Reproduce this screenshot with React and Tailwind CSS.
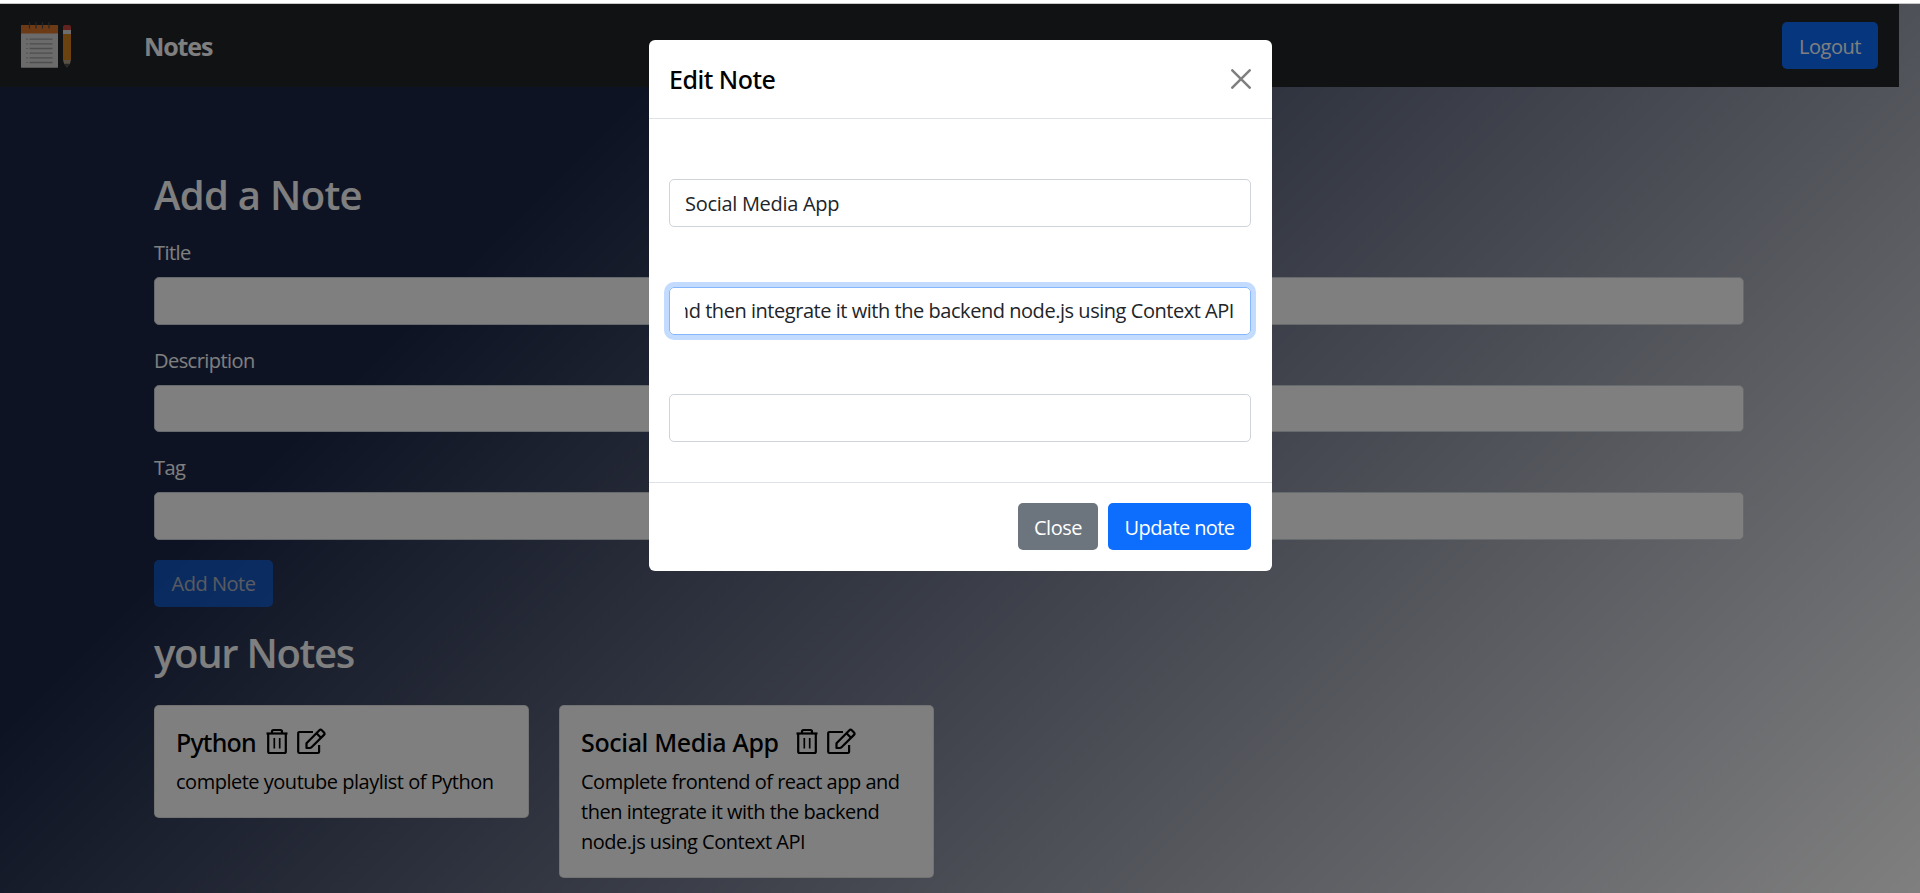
import React from 'react';

function NotepadLogo() {
  return (
    <svg className="h-[50px] w-[51px] shrink-0" viewBox="0 0 51 50">
      <rect x="0" y="4" width="37" height="43" rx="1.5" fill="#d6d6d6" />
      <path d="M0 12.5V5.5Q0 4 1.5 4H35.5Q37 4 37 5.5V12.5Z" fill="#d9752a" />
      <path d="M8.5 1V7.5M15 1V7.5M21.5 1V7.5M28 1V7.5" stroke="#4a4a4a" strokeWidth="1.2" />
      <path
        d="M8.5 18.2H31.5M8.5 22.8H31.5M8.5 27.5H31.5M8.5 32.2H31.5M8.5 36.8H31.5M8.5 41.5H31.5"
        stroke="#9a9a9a"
        strokeWidth="1.3"
      />
      <path
        d="M5 18.2H7M5 22.8H7M5 27.5H7M5 32.2H7M5 36.8H7M5 41.5H7"
        stroke="#ababab"
        strokeWidth="1.2"
      />
      <path d="M0.5 46.5H36.5" stroke="#a8a8a8" strokeWidth="1" />
      <path d="M42 9V6Q42 4 44 4H48Q50 4 50 6V9Z" fill="#c8453c" />
      <rect x="42" y="9" width="8" height="4" fill="#dadada" />
      <rect x="42" y="13" width="8" height="26" fill="#e07f1c" />
      <rect x="44.5" y="13" width="3" height="26" fill="#c98a20" />
      <path d="M42 39H50L49 42.5L46 46.5L43 42.5Z" fill="#b5a08a" />
      <path d="M43.3 42.8H48.7L46 46.5Z" fill="#4a4a4a" />
    </svg>
  );
}

function TrashIcon() {
  return (
    <svg className="h-7 w-[22px]" viewBox="0 0 22 28" fill="none" stroke="#000" strokeWidth="2.2">
      <path d="M0.5 5.5H21.5" />
      <path d="M6 5V3.5Q6 2 7.5 2H14.5Q16 2 16 3.5V5" />
      <path d="M2.2 5.5V23.5Q2.2 25 3.7 25H18.3Q19.8 25 19.8 23.5V5.5" />
      <path d="M8.3 10V20.5M13.7 10V20.5" strokeWidth="1.7" />
    </svg>
  );
}

function EditIcon() {
  return (
    <svg className="h-7 w-[29px]" viewBox="0 0 29 28" fill="none" stroke="#000" strokeWidth="2.2" strokeLinejoin="round">
      <path d="M16 4H2.5Q1.2 4 1.2 5.3V23.7Q1.2 25 2.5 25H20.8Q22.1 25 22.1 23.7V17" />
      <path d="M9.5 20V15.2L22.4 2.3Q23.6 1.1 24.8 2.3L27 4.5Q28.2 5.7 27 6.9L14.5 19.3Q13.8 20 12.8 20Z" />
      <path d="M19.5 5.2L24 9.7" />
    </svg>
  );
}

function Field({ label }) {
  return (
    <div className="mb-5">
      <div className="mb-2.5 h-[30px] leading-[31px] tracking-[-0.55px] text-white">{label}</div>
      <div className="h-[47.6px] rounded-[5px] border border-[#ced4da] bg-white" />
    </div>
  );
}

function NoteCard({ title, gap, text }) {
  return (
    <div className="w-[375px] rounded-[5px] border border-black/10 bg-white px-[21px] pt-[19px] pb-5 text-black">
      <div className="mb-2 flex h-[34px] items-center">
        <h5 className={`font-['Noto_Sans',sans-serif] text-[25px] leading-[34px] font-medium ${gap}`}>{title}</h5>
        <div className="flex gap-[9px]">
          <TrashIcon />
          <EditIcon />
        </div>
      </div>
      <p className="leading-[30px] tracking-[-0.49px] whitespace-pre-line">{text}</p>
    </div>
  );
}

function ModalField({ children, className }) {
  return (
    <div className={`flex h-12 items-center overflow-hidden rounded-[5px] border px-[15px] ${className}`}>{children}</div>
  );
}

export default function App() {
  return (
    <div className="relative flex h-[893px] w-full flex-col overflow-hidden bg-white font-['Open_Sans',sans-serif] text-[20px]">
      <div className="h-1 shrink-0 border-b border-[#c8c8c8] bg-white" />
      <div className="relative flex-1 bg-[linear-gradient(135deg,#1c2748_26%,#ffffff_100%)]">
        <nav className="flex h-[83px] w-[1899px] items-center bg-[#212529] px-[21px]">
          <NotepadLogo />
          <span className="ml-[72px] pt-[3px] text-[25px] font-bold tracking-[-1.1px] text-white">Notes</span>
          <button className="ml-auto h-[47px] w-24 rounded-[5px] bg-[#0d6efd] pt-0.5 tracking-[-0.5px] text-white">
            Logout
          </button>
        </nav>

        <main className="ml-[154px] w-[1590px] pt-[83px]">
          <h2 className="h-12 text-[40px] leading-[50px] font-semibold tracking-[-0.7px] text-white">Add a Note</h2>
          <div className="mt-[19px]">
            <Field label="Title" />
            <Field label="Description" />
            <Field label="Tag" />
          </div>
          <button className="h-[47px] w-[119px] rounded-[5px] bg-[#0d6efd] pt-0.5 tracking-[-0.5px] text-white opacity-65">
            Add Note
          </button>
          <h2 className="mt-[22px] h-12 text-[40px] leading-[48px] font-semibold tracking-[-1.3px] text-white">
            your Notes
          </h2>
          <div className="mt-[28px] flex items-start gap-[30px]">
            <NoteCard title="Python" gap="mr-[10px] w-[80px] tracking-[-0.8px]" text="complete youtube playlist of Python" />
            <NoteCard
              title="Social Media App"
              gap="mr-[17px] w-[198px] whitespace-nowrap tracking-[-0.35px]"
              text={'Complete frontend of react app and\nthen integrate it with the backend\nnode.js using Context API'}
            />
          </div>
        </main>
        <div className="absolute inset-0 bg-black/50" />
      </div>

      <div className="absolute top-10 left-[649px] w-[623px] rounded-[6px] bg-white">
        <div className="flex h-[79px] items-center justify-between border-b border-[#dee2e6] pr-[21px] pl-5">
          <h5 className="pt-0.5 font-['Noto_Sans',sans-serif] text-[25px] font-medium tracking-[-0.5px] text-black">
            Edit Note
          </h5>
          <svg className="h-5 w-5" viewBox="0 0 20 20" stroke="#7f7f7f" strokeWidth="2.5" strokeLinecap="round">
            <path d="M1.3 1.3L18.7 18.7M18.7 1.3L1.3 18.7" />
          </svg>
        </div>
        <div className="flex h-[363px] flex-col gap-[59.5px] pt-[60px] pr-[21px] pl-5">
          <ModalField className="border-[#ced4da] text-[#212529]">
            <span className="pt-0.5 tracking-[-0.3px]">Social Media App</span>
          </ModalField>
          <ModalField className="justify-end border-[#86b7fe] text-[#212529] shadow-[0_0_0_5px_rgba(13,110,253,0.25)]">
            <div className="flex w-full justify-end overflow-hidden">
              <span className="pt-px pr-px tracking-[-0.46px] whitespace-nowrap">
                Complete frontend of react app and then integrate it with the backend node.js using Context API
              </span>
            </div>
          </ModalField>
          <ModalField className="border-[#ced4da]" />
        </div>
        <div className="flex h-[89px] items-center justify-end gap-[10px] border-t border-[#dee2e6] pr-[21px] pb-px text-white">
          <button className="h-[47px] w-20 rounded-[5px] bg-[#6c757d] pt-0.5 tracking-[-0.5px]">Close</button>
          <button className="h-[47px] w-[143px] rounded-[5px] bg-[#0d6efd] pt-0.5 tracking-[-0.6px]">Update note</button>
        </div>
      </div>
    </div>
  );
}
